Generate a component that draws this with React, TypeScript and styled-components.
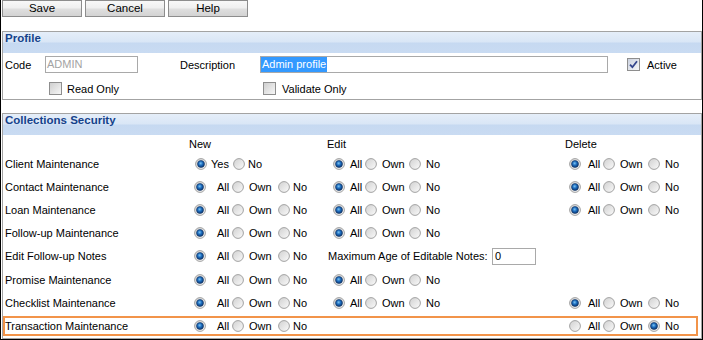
import React, { useId } from "react";
import styled, { createGlobalStyle } from "styled-components";

const GlobalStyle = createGlobalStyle`
  html, body {
    margin: 0;
    padding: 0;
    background: #fff;
  }
  body {
    font-family: "Liberation Sans", Arial, sans-serif;
    font-size: 11px;
    color: #000;
  }
`;

const Frame = styled.div`
  width: 703px;
  height: 340px;
  box-sizing: border-box;
  border: 1px solid #000;
  border-top: none;
  display: flex;
  flex-direction: column;
  overflow: hidden;
`;

const Toolbar = styled.div`
  display: flex;
  gap: 3px;
  padding-left: 1px;
  height: 17px;
  flex-shrink: 0;
`;

const Button = styled.button`
  width: 80px;
  height: 17px;
  padding: 0;
  border: 1px solid #8d8d8d;
  background: linear-gradient(#f8f8f8 0%, #efefef 48%, #dfdfdf 52%, #d3d3d3 100%);
  font: 11.5px "Liberation Sans", Arial, sans-serif;
  color: #000;
  line-height: 15px;
`;

const Panel = styled.section<{ $top: number; $grow?: boolean }>`
  margin: ${(p) => p.$top}px 0 0 1px;
  border: 1px solid #a3a3a3;
  flex-shrink: 0;
  ${(p) => (p.$grow ? "flex: 1;" : "")}
`;

const PanelHeader = styled.h2`
  margin: 0;
  height: 21px;
  line-height: 21px;
  padding-left: 2px;
  font: bold 11.5px "Liberation Sans", Arial, sans-serif;
  color: #15428b;
  background: linear-gradient(#e5eef9 0%, #d9e6f6 48%, #c6d9f1 52%, #c9dbf2 100%);
`;

const ProfileBody = styled.div`
  height: 46px;
  box-sizing: border-box;
  padding: 3px 0 0 2px;
  display: grid;
  grid-template-columns: 40px 135px 80px 367px auto;
  grid-template-rows: 17px 19px;
  row-gap: 6px;
  align-items: center;
`;

const Cell = styled.div<{ $col?: number; $pad?: number }>`
  ${(p) => (p.$col ? `grid-column: ${p.$col};` : "")}
  padding-left: ${(p) => p.$pad ?? 0}px;
  display: flex;
  align-items: center;
  white-space: nowrap;
`;

const Field = styled.div<{ $w: number; $pad?: number; $muted?: boolean }>`
  width: ${(p) => p.$w}px;
  height: 17px;
  box-sizing: border-box;
  border: 1px solid #a9a9a9;
  background: #fff;
  padding-left: ${(p) => p.$pad ?? 1}px;
  line-height: 15px;
  color: ${(p) => (p.$muted ? "#a3a3a3" : "#000")};
  white-space: nowrap;
  overflow: hidden;
`;

const Selected = styled.span`
  display: inline-block;
  height: 15px;
  padding: 0 1px;
  background: #3399ff;
  color: #fff;
`;

const CheckLabel = styled.label<{ $gap: number }>`
  display: inline-flex;
  align-items: center;
  gap: ${(p) => p.$gap}px;
`;

const Icon = styled.svg`
  display: block;
  flex-shrink: 0;
`;

const HeadRow = styled.div`
  display: grid;
  grid-template-columns: 182px 140px 235px 1fr;
  height: 17px;
  align-items: center;
`;

const Row = styled.div<{ $flagged?: boolean }>`
  display: grid;
  grid-template-columns: ${(p) => (p.$flagged ? "180px" : "182px")} 140px 235px 1fr;
  align-items: center;
  box-sizing: border-box;
  height: ${(p) => (p.$flagged ? "20px" : "23.2px")};
  ${(p) =>
    p.$flagged
      ? `margin: 2px 3px 0 0; border: 2px solid #f2944a;`
      : ""}
`;

const RowLabel = styled.div<{ $flagged?: boolean }>`
  padding-left: ${(p) => (p.$flagged ? 0 : 2)}px;
  white-space: nowrap;
`;

const Option = styled.label<{ $w?: number }>`
  display: inline-flex;
  align-items: center;
  ${(p) => (p.$w ? `width: ${p.$w}px;` : "")}
  white-space: nowrap;
`;

const OptText = styled.span<{ $gap: number }>`
  margin-left: ${(p) => p.$gap}px;
`;

const AgeText = styled.span`
  display: inline-block;
  width: 164px;
`;

function Checkbox({ on }: { on?: boolean }) {
  const id = "c" + useId().replace(/[^a-zA-Z0-9]/g, "");
  return (
    <Icon width="13" height="13" viewBox="0 0 13 13">
      <defs>
        <linearGradient id={id} x1="0" y1="0" x2="1" y2="1">
          <stop offset="0" stopColor={on ? "#c9d0df" : "#cdcdcd"} />
          <stop offset="1" stopColor="#f8f8f8" />
        </linearGradient>
      </defs>
      <rect x="0.5" y="0.5" width="12" height="12" fill={`url(#${id})`} stroke="#8e8e8e" />
      {on && (
        <path d="M3 6.6 L5.4 9.2 L10 3.3" fill="none" stroke="#33458c" strokeWidth="1.8" />
      )}
    </Icon>
  );
}

function Radio({ on }: { on?: boolean }) {
  const id = "r" + useId().replace(/[^a-zA-Z0-9]/g, "");
  return (
    <Icon width="12" height="12" viewBox="0 0 12 12">
      <defs>
        <linearGradient id={`${id}a`} x1="0" y1="0" x2="1" y2="1">
          <stop offset="0" stopColor="#d0d0d0" />
          <stop offset="1" stopColor="#fbfbfb" />
        </linearGradient>
        <radialGradient id={`${id}b`} cx="0.45" cy="0.4" r="0.65">
          <stop offset="0" stopColor="#7cc4f2" />
          <stop offset="0.45" stopColor="#1b6bbd" />
          <stop offset="1" stopColor="#092f66" />
        </radialGradient>
      </defs>
      <circle cx="6" cy="6" r="5.4" fill={`url(#${id}a)`} stroke="#a2a2a2" strokeWidth="1" />
      {on && <circle cx="6" cy="6" r="3.5" fill={`url(#${id}b)`} stroke="#12335f" strokeWidth="0.6" />}
    </Icon>
  );
}

type Layout = { pad: number; widths: number[]; gaps: number[] };

const NEW_AON: Layout = { pad: 9, widths: [38, 46], gaps: [11, 5, 3] };
const NEW_YN: Layout = { pad: 10, widths: [38], gaps: [4, 3] };
const EDIT: Layout = { pad: 8, widths: [32, 44], gaps: [5, 5, 5] };
const DEL: Layout = { pad: 9, widths: [34, 45], gaps: [7, 5, 5] };

const AON = ["All", "Own", "No"];

function Choices({ labels, pick, layout }: { labels: string[]; pick: number; layout: Layout }) {
  return (
    <Cell $pad={layout.pad}>
      {labels.map((l, i) => (
        <Option key={l} $w={layout.widths[i]}>
          <Radio on={i === pick} />
          <OptText $gap={layout.gaps[i]}>{l}</OptText>
        </Option>
      ))}
    </Cell>
  );
}

type Perm = {
  name: string;
  yesNo?: boolean;
  edit?: number | "age";
  del?: number;
  flagged?: boolean;
};

const perms: Perm[] = [
  { name: "Client Maintenance", yesNo: true, edit: 0, del: 0 },
  { name: "Contact Maintenance", edit: 0, del: 0 },
  { name: "Loan Maintenance", edit: 0, del: 0 },
  { name: "Follow-up Maintenance", edit: 0 },
  { name: "Edit Follow-up Notes", edit: "age" },
  { name: "Promise Maintenance", edit: 0 },
  { name: "Checklist Maintenance", edit: 0, del: 0 },
  { name: "Transaction Maintenance", del: 2, flagged: true },
];

export default function App() {
  return (
    <>
      <GlobalStyle />
      <Frame>
        <Toolbar>
          <Button>Save</Button>
          <Button>Cancel</Button>
          <Button>Help</Button>
        </Toolbar>

        <Panel $top={14}>
          <PanelHeader>Profile</PanelHeader>
          <ProfileBody>
            <Cell>Code</Cell>
            <Cell>
              <Field $w={93} $muted>ADMIN</Field>
            </Cell>
            <Cell>Description</Cell>
            <Cell>
              <Field $w={348} $pad={0}>
                <Selected>Admin profile</Selected>
              </Field>
            </Cell>
            <Cell>
              <CheckLabel $gap={7}>
                <Checkbox on />
                Active
              </CheckLabel>
            </Cell>
            <Cell $col={2} $pad={4}>
              <CheckLabel $gap={5}>
                <Checkbox />
                Read Only
              </CheckLabel>
            </Cell>
            <Cell $col={4} $pad={3}>
              <CheckLabel $gap={6}>
                <Checkbox />
                Validate Only
              </CheckLabel>
            </Cell>
          </ProfileBody>
        </Panel>

        <Panel $top={13} $grow>
          <PanelHeader>Collections Security</PanelHeader>
          <HeadRow>
            <div />
            <Cell $pad={4}>New</Cell>
            <Cell $pad={2}>Edit</Cell>
            <Cell $pad={5}>Delete</Cell>
          </HeadRow>
          {perms.map((p) => (
            <Row key={p.name} $flagged={p.flagged}>
              <RowLabel $flagged={p.flagged}>{p.name}</RowLabel>
              {p.yesNo ? (
                <Choices labels={["Yes", "No"]} pick={0} layout={NEW_YN} />
              ) : (
                <Choices labels={AON} pick={0} layout={NEW_AON} />
              )}
              {p.edit === "age" ? (
                <Cell $pad={3}>
                  <AgeText>Maximum Age of Editable Notes:</AgeText>
                  <Field $w={44} $pad={2}>0</Field>
                </Cell>
              ) : p.edit !== undefined ? (
                <Choices labels={AON} pick={p.edit} layout={EDIT} />
              ) : (
                <div />
              )}
              {p.del !== undefined ? <Choices labels={AON} pick={p.del} layout={DEL} /> : <div />}
            </Row>
          ))}
        </Panel>
      </Frame>
    </>
  );
}
